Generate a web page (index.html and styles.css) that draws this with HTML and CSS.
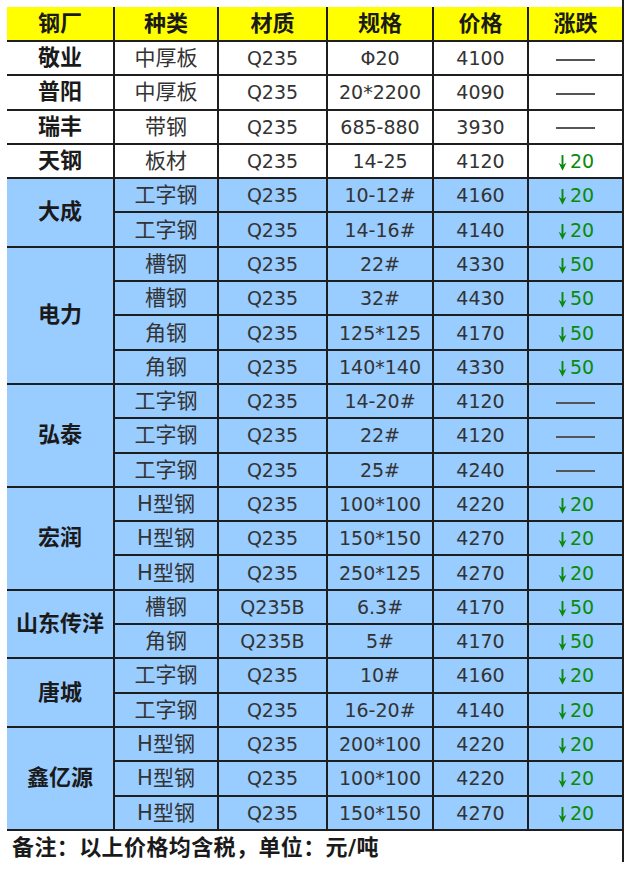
FILE: index.html
```html
<!DOCTYPE html>
<html lang="zh">
<head>
<meta charset="utf-8">
<title>钢材价格</title>
<link rel="stylesheet" href="styles.css">
</head>
<body>
<div class="sheet">
  <table class="prices">
    <colgroup>
      <col class="c1"><col class="c2"><col class="c3"><col class="c4"><col class="c5"><col class="c6">
    </colgroup>
    <thead>
      <tr class="head"><th>钢厂</th><th>种类</th><th>材质</th><th>规格</th><th>价格</th><th>涨跌</th></tr>
    </thead>
    <tbody>
      <tr><td class="mill">敬业</td><td class="kind">中厚板</td><td>Q235</td><td>Φ20</td><td>4100</td><td><span class="dash"></span></td></tr>
      <tr><td class="mill">普阳</td><td class="kind">中厚板</td><td>Q235</td><td>20*2200</td><td>4090</td><td><span class="dash"></span></td></tr>
      <tr><td class="mill">瑞丰</td><td class="kind">带钢</td><td>Q235</td><td>685-880</td><td>3930</td><td><span class="dash"></span></td></tr>
      <tr><td class="mill">天钢</td><td class="kind">板材</td><td>Q235</td><td>14-25</td><td>4120</td><td class="down"><svg class="arrow" viewBox="0 0 10 16" width="11" height="17"><path d="M5 1V11" stroke="#0a8a0a" stroke-width="1.8"/><path d="M1.3 8.3L5 15.8L8.7 8.3L5 10.5Z" fill="#0a8a0a"/></svg>20</td></tr>
    </tbody>
    <tbody class="blue">
      <tr><td class="mill" rowspan="2">大成</td><td class="kind">工字钢</td><td>Q235</td><td>10-12#</td><td>4160</td><td class="down"><svg class="arrow" viewBox="0 0 10 16" width="11" height="17"><path d="M5 1V11" stroke="#0a8a0a" stroke-width="1.8"/><path d="M1.3 8.3L5 15.8L8.7 8.3L5 10.5Z" fill="#0a8a0a"/></svg>20</td></tr>
      <tr><td class="kind">工字钢</td><td>Q235</td><td>14-16#</td><td>4140</td><td class="down"><svg class="arrow" viewBox="0 0 10 16" width="11" height="17"><path d="M5 1V11" stroke="#0a8a0a" stroke-width="1.8"/><path d="M1.3 8.3L5 15.8L8.7 8.3L5 10.5Z" fill="#0a8a0a"/></svg>20</td></tr>

      <tr><td class="mill" rowspan="4">电力</td><td class="kind">槽钢</td><td>Q235</td><td>22#</td><td>4330</td><td class="down"><svg class="arrow" viewBox="0 0 10 16" width="11" height="17"><path d="M5 1V11" stroke="#0a8a0a" stroke-width="1.8"/><path d="M1.3 8.3L5 15.8L8.7 8.3L5 10.5Z" fill="#0a8a0a"/></svg>50</td></tr>
      <tr><td class="kind">槽钢</td><td>Q235</td><td>32#</td><td>4430</td><td class="down"><svg class="arrow" viewBox="0 0 10 16" width="11" height="17"><path d="M5 1V11" stroke="#0a8a0a" stroke-width="1.8"/><path d="M1.3 8.3L5 15.8L8.7 8.3L5 10.5Z" fill="#0a8a0a"/></svg>50</td></tr>
      <tr><td class="kind">角钢</td><td>Q235</td><td>125*125</td><td>4170</td><td class="down"><svg class="arrow" viewBox="0 0 10 16" width="11" height="17"><path d="M5 1V11" stroke="#0a8a0a" stroke-width="1.8"/><path d="M1.3 8.3L5 15.8L8.7 8.3L5 10.5Z" fill="#0a8a0a"/></svg>50</td></tr>
      <tr><td class="kind">角钢</td><td>Q235</td><td>140*140</td><td>4330</td><td class="down"><svg class="arrow" viewBox="0 0 10 16" width="11" height="17"><path d="M5 1V11" stroke="#0a8a0a" stroke-width="1.8"/><path d="M1.3 8.3L5 15.8L8.7 8.3L5 10.5Z" fill="#0a8a0a"/></svg>50</td></tr>

      <tr><td class="mill" rowspan="3">弘泰</td><td class="kind">工字钢</td><td>Q235</td><td>14-20#</td><td>4120</td><td><span class="dash"></span></td></tr>
      <tr><td class="kind">工字钢</td><td>Q235</td><td>22#</td><td>4120</td><td><span class="dash"></span></td></tr>
      <tr><td class="kind">工字钢</td><td>Q235</td><td>25#</td><td>4240</td><td><span class="dash"></span></td></tr>

      <tr><td class="mill" rowspan="3">宏润</td><td class="kind">H型钢</td><td>Q235</td><td>100*100</td><td>4220</td><td class="down"><svg class="arrow" viewBox="0 0 10 16" width="11" height="17"><path d="M5 1V11" stroke="#0a8a0a" stroke-width="1.8"/><path d="M1.3 8.3L5 15.8L8.7 8.3L5 10.5Z" fill="#0a8a0a"/></svg>20</td></tr>
      <tr><td class="kind">H型钢</td><td>Q235</td><td>150*150</td><td>4270</td><td class="down"><svg class="arrow" viewBox="0 0 10 16" width="11" height="17"><path d="M5 1V11" stroke="#0a8a0a" stroke-width="1.8"/><path d="M1.3 8.3L5 15.8L8.7 8.3L5 10.5Z" fill="#0a8a0a"/></svg>20</td></tr>
      <tr><td class="kind">H型钢</td><td>Q235</td><td>250*125</td><td>4270</td><td class="down"><svg class="arrow" viewBox="0 0 10 16" width="11" height="17"><path d="M5 1V11" stroke="#0a8a0a" stroke-width="1.8"/><path d="M1.3 8.3L5 15.8L8.7 8.3L5 10.5Z" fill="#0a8a0a"/></svg>20</td></tr>

      <tr><td class="mill" rowspan="2">山东传洋</td><td class="kind">槽钢</td><td>Q235B</td><td>6.3#</td><td>4170</td><td class="down"><svg class="arrow" viewBox="0 0 10 16" width="11" height="17"><path d="M5 1V11" stroke="#0a8a0a" stroke-width="1.8"/><path d="M1.3 8.3L5 15.8L8.7 8.3L5 10.5Z" fill="#0a8a0a"/></svg>50</td></tr>
      <tr><td class="kind">角钢</td><td>Q235B</td><td>5#</td><td>4170</td><td class="down"><svg class="arrow" viewBox="0 0 10 16" width="11" height="17"><path d="M5 1V11" stroke="#0a8a0a" stroke-width="1.8"/><path d="M1.3 8.3L5 15.8L8.7 8.3L5 10.5Z" fill="#0a8a0a"/></svg>50</td></tr>

      <tr><td class="mill" rowspan="2">唐城</td><td class="kind">工字钢</td><td>Q235</td><td>10#</td><td>4160</td><td class="down"><svg class="arrow" viewBox="0 0 10 16" width="11" height="17"><path d="M5 1V11" stroke="#0a8a0a" stroke-width="1.8"/><path d="M1.3 8.3L5 15.8L8.7 8.3L5 10.5Z" fill="#0a8a0a"/></svg>20</td></tr>
      <tr><td class="kind">工字钢</td><td>Q235</td><td>16-20#</td><td>4140</td><td class="down"><svg class="arrow" viewBox="0 0 10 16" width="11" height="17"><path d="M5 1V11" stroke="#0a8a0a" stroke-width="1.8"/><path d="M1.3 8.3L5 15.8L8.7 8.3L5 10.5Z" fill="#0a8a0a"/></svg>20</td></tr>

      <tr><td class="mill" rowspan="3">鑫亿源</td><td class="kind">H型钢</td><td>Q235</td><td>200*100</td><td>4220</td><td class="down"><svg class="arrow" viewBox="0 0 10 16" width="11" height="17"><path d="M5 1V11" stroke="#0a8a0a" stroke-width="1.8"/><path d="M1.3 8.3L5 15.8L8.7 8.3L5 10.5Z" fill="#0a8a0a"/></svg>20</td></tr>
      <tr><td class="kind">H型钢</td><td>Q235</td><td>100*100</td><td>4220</td><td class="down"><svg class="arrow" viewBox="0 0 10 16" width="11" height="17"><path d="M5 1V11" stroke="#0a8a0a" stroke-width="1.8"/><path d="M1.3 8.3L5 15.8L8.7 8.3L5 10.5Z" fill="#0a8a0a"/></svg>20</td></tr>
      <tr><td class="kind">H型钢</td><td>Q235</td><td>150*150</td><td>4270</td><td class="down"><svg class="arrow" viewBox="0 0 10 16" width="11" height="17"><path d="M5 1V11" stroke="#0a8a0a" stroke-width="1.8"/><path d="M1.3 8.3L5 15.8L8.7 8.3L5 10.5Z" fill="#0a8a0a"/></svg>20</td></tr>
    </tbody>
  </table>
  <p class="note">备注：以上价格均含税，单位：元/吨</p>
</div>
</body>
</html>
```

FILE: styles.css
```css
html, body {
  margin: 0;
  padding: 0;
  background: #ffffff;
}

body {
  font-family: "DejaVu Sans", "Noto Sans CJK SC", sans-serif;
  color: #333333;
}

.sheet {
  box-sizing: border-box;
  width: 617px;
  height: 862px;
  margin-left: 7px;
  padding-top: 7px;
  border-right: 2px solid #1e1e1e;
}

.prices {
  width: 615px;
  table-layout: fixed;
  border-collapse: collapse;
}

.c1 { width: 107px; }
.c2 { width: 104px; }
.c3 { width: 109px; }
.c4 { width: 106px; }
.c5 { width: 95px; }
.c6 { width: 94px; }

.prices th,
.prices td {
  padding: 0;
  text-align: center;
  vertical-align: middle;
  border: 2px solid #1e1e1e;
  font-size: 19px;
  font-weight: normal;
  line-height: 24px;
  white-space: nowrap;
}

.prices tr > :first-child { border-left: none; }
.prices tr > :last-child { border-right: none; }
.prices thead th { border-top: none; }

.head { height: 34px; }
.head th {
  background: #ffff00;
  color: #1a1a1a;
  font-weight: bold;
  font-size: 22px;
}

.prices tbody tr { height: 34.3px; }

.prices td.mill {
  font-weight: bold;
  font-size: 22px;
  color: #1a1a1a;
}

.prices td.kind {
  font-size: 21px;
}

.blue td { background: #99ccff; }

.dash {
  display: inline-block;
  width: 39px;
  height: 2px;
  background: #555555;
  vertical-align: middle;
}

.down {
  color: #0a8a0a;
}

.arrow {
  vertical-align: -3px;
  margin-right: 2px;
}

.note {
  margin: 0;
  padding: 3px 0 0 5px;
  font-size: 22px;
  font-weight: bold;
  color: #1a1a1a;
  line-height: 28px;
  letter-spacing: 0.4px;
}
```
